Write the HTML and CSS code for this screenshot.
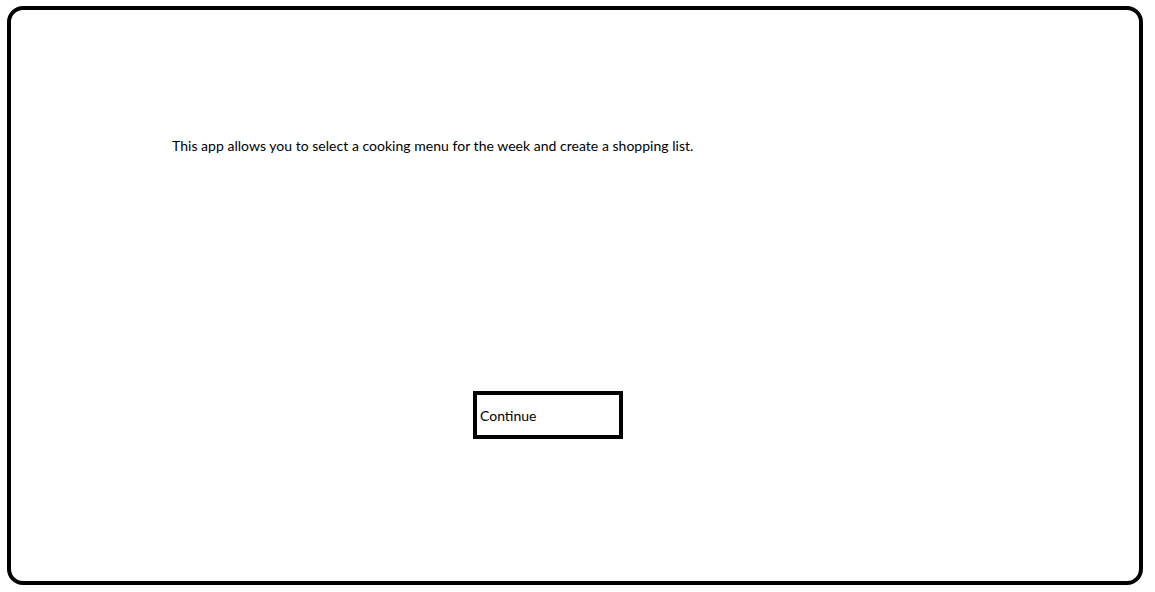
FILE: index.html
```html
<!DOCTYPE html>
<html>
<head>
<meta charset="utf-8">
<link rel="stylesheet" href="styles.css">
</head>
<body>
<div class="frame">
  <p class="intro">This app allows you to select a cooking menu for the week and create a shopping list.</p>
  <button class="continue">Continue</button>
</div>
</body>
</html>
```
FILE: styles.css
```css
html, body {
  margin: 0;
  padding: 0;
  background: #ffffff;
}
body {
  padding: 6px 12px 7px 7px;
  font-family: "Lato", "Open Sans", sans-serif;
  color: #000;
}
.frame {
  box-sizing: border-box;
  width: 1136px;
  height: 579px;
  border: 4px solid #000;
  border-radius: 16px;
  display: flex;
  flex-direction: column;
  align-items: flex-start;
}
.intro {
  margin: 127px 0 0 161px;
  font-size: 14px;
  line-height: 18px;
  letter-spacing: 0.025px;
}
.continue {
  box-sizing: border-box;
  margin: 236px 0 0 462px;
  width: 150px;
  height: 48px;
  border: 4px solid #000;
  background: #fff;
  padding: 0 0 0 3px;
  text-align: left;
  font-family: inherit;
  font-size: 14px;
  color: #000;
  border-radius: 0;
}
```
